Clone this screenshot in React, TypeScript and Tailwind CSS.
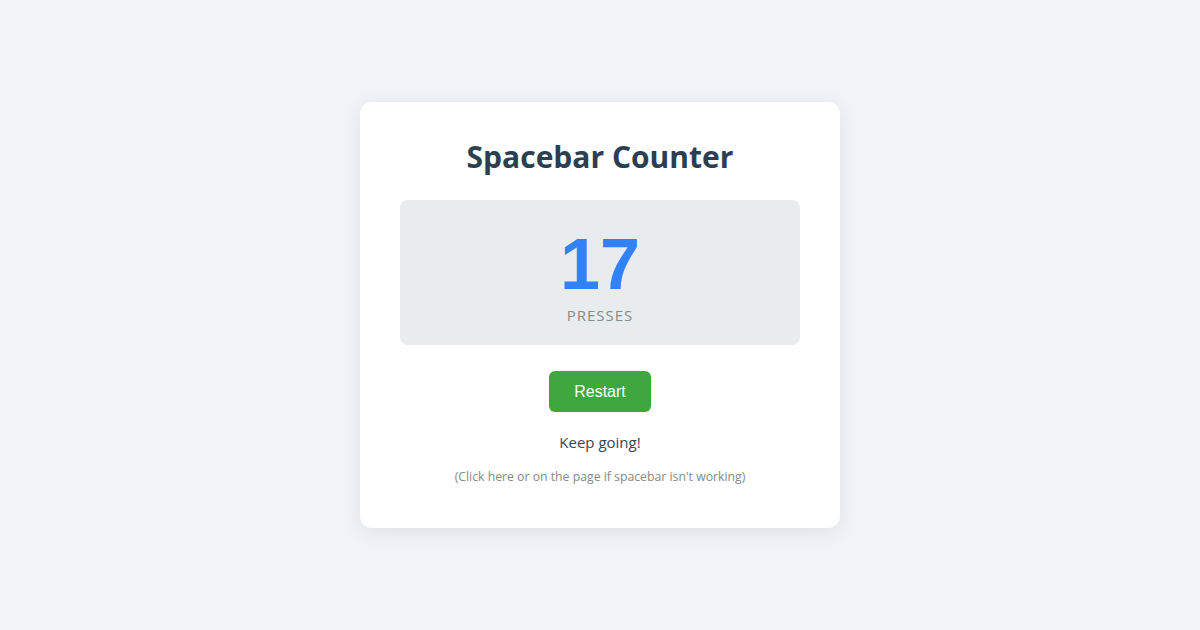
export default function App() {
  return (
    <div className="flex h-[630px] w-full items-center justify-center bg-[#f0f4f8] font-['Open_Sans',sans-serif]">
      <div className="flex w-[480px] flex-col items-center rounded-xl bg-white px-10 pt-[35px] pb-[42px] shadow-[0_4px_20px_rgba(0,0,0,0.08)]">
        <h1 className="text-[30px] font-bold leading-[40px] text-[#2c3e50]">
          Spacebar Counter
        </h1>

        {/* counter */}
        <div className="mt-[23px] flex w-full flex-col items-center rounded-lg bg-[#e9ecef] pt-[26px] pb-[19px]">
          <div className="font-['Liberation_Sans',Arial,sans-serif] text-[72px] font-bold leading-[76px] text-[#3182f6]">
            17
          </div>
          <div className="mt-[2px] text-[15px] uppercase leading-[22px] tracking-[1px] text-[#7f8c8d]">
            Presses
          </div>
        </div>

        <button className="mt-[26px] h-[41px] w-[102px] rounded-md bg-[#3ea83e] font-['Liberation_Sans',Arial,sans-serif] text-[16px] text-white">
          Restart
        </button>

        <p className="mt-[19px] text-[15px] leading-[22px] text-[#3a4651]">
          Keep going!
        </p>
        <p className="mt-[15px] text-[12.25px] leading-[18px] text-[#888888]">
          (Click here or on the page if spacebar isn't working)
        </p>
      </div>
    </div>
  );
}
